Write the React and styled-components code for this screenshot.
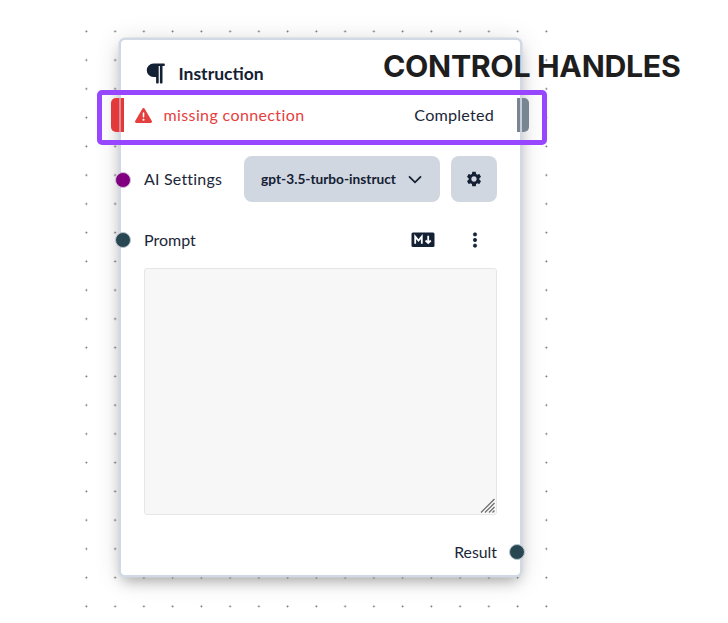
import React from "react";
import styled, { createGlobalStyle } from "styled-components";
import { FaTriangleExclamation } from "react-icons/fa6";
import { MdSettings } from "react-icons/md";
import { BsThreeDotsVertical } from "react-icons/bs";

const GlobalStyle = createGlobalStyle`
  * { box-sizing: border-box; }
  body { margin: 0; background: #fff; }
`;

const Page = styled.main`
  position: relative;
  width: 728px;
  height: 623px;
  overflow: hidden;
  background: #fff;
  padding: 38px 0 0 118.5px;
  font-family: Lato, "Open Sans", sans-serif;
  color: #1b2739;
`;

const DotGrid = styled.div`
  position: absolute;
  left: 72px;
  top: 17px;
  width: 488.75px;
  height: 603.75px;
  background-image: radial-gradient(circle at center, #66676f 0, #66676f 0.6px, transparent 1.25px);
  background-size: 28.75px 28.75px;
`;

const Card = styled.section`
  position: relative;
  width: 403px;
  height: 538.5px;
  display: flex;
  flex-direction: column;
  background: #fff;
  border: 2px solid #d1d9e4;
  border-radius: 6px;
  box-shadow: 0 0 0 0.5px #d1d9e4, 0 7px 14px -4px rgba(0, 0, 0, 0.3), 0 3px 26px rgba(0, 0, 0, 0.14);
  padding: 0 22.5px 0 23.5px;
`;

const Header = styled.header`
  height: 50.5px;
  flex: none;
  display: flex;
  align-items: center;
  padding: 17px 0 0 1.5px;
  gap: 14px;
  color: #142033;
`;

const Row = styled.div`
  position: relative;
  flex: none;
  display: flex;
  align-items: center;
  justify-content: space-between;
  height: ${(p) => p.$height}px;
`;

const Text = styled.span`
  font-size: ${(p) => p.$size || 16}px;
  font-weight: ${(p) => p.$weight || 400};
  letter-spacing: ${(p) => p.$spacing || 0}px;
  line-height: 22px;
  white-space: nowrap;
`;

const Status = styled.div`
  display: flex;
  align-items: center;
  gap: 11.5px;
  margin-left: -9px;
  color: #e53e3e;
`;

const Completed = styled(Text)`
  margin-right: 3px;
`;

const ControlHandle = styled.i`
  position: absolute;
  top: 7px;
  ${(p) => p.$side}: ${(p) => (p.$side === "left" ? -33.5 : -31.5)}px;
  width: ${(p) => (p.$side === "left" ? 13.5 : 11.5)}px;
  height: 34.5px;
  border-radius: ${(p) => (p.$side === "left" ? "5px 0 0 5px" : "0 5px 5px 0")};
  background: ${(p) => p.$color};

  &::after {
    content: "";
    position: absolute;
    top: 0;
    left: ${(p) => (p.$side === "left" ? 8 : 3)}px;
    width: 2px;
    height: 100%;
    background: ${(p) => p.$line};
  }
`;

const Port = styled.i`
  position: absolute;
  top: ${(p) => p.$top}px;
  ${(p) => p.$side}: ${(p) => (p.$side === "left" ? -29 : -28)}px;
  width: 16px;
  height: 16px;
  border-radius: 50%;
  border: 1px solid ${(p) => p.$ring};
  background: ${(p) => p.$color};
`;

const Controls = styled.div`
  display: flex;
  gap: 11px;
`;

const Button = styled.button`
  width: ${(p) => p.$width}px;
  height: 46px;
  border: 0;
  border-radius: 8px;
  padding: 0;
  background: #d0d7e1;
  color: #142033;
  font-family: inherit;
  display: flex;
  align-items: center;
  justify-content: center;
  gap: 12px;
`;

const Tools = styled.div`
  display: flex;
  align-items: center;
  gap: 30.5px;
  padding-right: 13.5px;
  color: #142033;
`;

const Prompt = styled.div`
  flex: none;
  width: 353px;
  height: 247px;
  margin-top: 6px;
  display: flex;
  align-items: flex-end;
  justify-content: flex-end;
  background: #f7f7f7;
  border: 1px solid #e5e6e8;
  border-radius: 3px;
  padding: 0 1px 1px 0;
`;

const Highlight = styled.div`
  position: absolute;
  left: 97px;
  top: 90px;
  width: 450px;
  height: 55px;
  border: 5px solid #9747ff;
  border-radius: 5px;
`;

const Caption = styled.h1`
  position: absolute;
  left: 383px;
  top: 46px;
  margin: 0;
  font: 700 30.3px/40px Inter, sans-serif;
  letter-spacing: -0.32px;
  color: #1e1e1e;
  white-space: nowrap;
`;

export default function App() {
  return (
    <Page>
      <GlobalStyle />
      <DotGrid />
      <Card>
        <Header>
          <svg width="19" height="21" viewBox="0 0 19 21" fill="currentColor">
            <path d="M7.5 0.5H18a.8.8 0 0 1 .8.8v1a.8.8 0 0 1-.8.8h-1.5v16.6a.8.8 0 0 1-.8.8h-1a.8.8 0 0 1-.8-.8V3.1h-1.2v16.6a.8.8 0 0 1-.8.8h-1a.8.8 0 0 1-.8-.8V14H7.5a6.75 6.75 0 0 1 0-13.5Z" />
          </svg>
          <Text $size={17.5} $weight={700}>Instruction</Text>
        </Header>

        <Row $height={49.5}>
          <ControlHandle $side="left" $color="#e23a3a" $line="#dc8d93" />
          <Status>
            <FaTriangleExclamation size={17} />
            <Text $spacing={0.38}>missing connection</Text>
          </Status>
          <Completed $size={16.2} $spacing={0.2}>Completed</Completed>
          <ControlHandle $side="right" $color="#778692" $line="#c5ced9" />
        </Row>

        <Row $height={78.5}>
          <Port $side="left" $top={31.5} $color="#800080" $ring="#d3bbd8" />
          <Text $spacing={0.2}>AI Settings</Text>
          <Controls>
            <Button $width={196}>
              <Text $size={13.7} $weight={700}>gpt-3.5-turbo-instruct</Text>
              <svg width="14" height="9" viewBox="0 0 14 9" fill="none" stroke="currentColor" strokeWidth="1.8">
                <path d="M1 1.3 7 7.3 13 1.3" />
              </svg>
            </Button>
            <Button $width={46.5}>
              <MdSettings size={18} />
            </Button>
          </Controls>
        </Row>

        <Row $height={43}>
          <Port $side="left" $top={13.5} $color="#284753" $ring="#b8c4ce" />
          <Text>Prompt</Text>
          <Tools>
            <svg width="24" height="16" viewBox="0 0 24 16">
              <rect x="0.5" y="0.5" width="23" height="14.5" rx="1.5" fill="currentColor" />
              <path d="M4.2 11.7V4.6L7.5 8.6 10.8 4.6V11.7M17.2 3.8V11M14.6 8.5 17.2 11.1 19.8 8.5" fill="none" stroke="#fff" strokeWidth="1.8" />
            </svg>
            <BsThreeDotsVertical size={18} stroke="currentColor" strokeWidth={0.6} />
          </Tools>
        </Row>

        <Prompt style={undefined}>
          <svg width="15" height="15" viewBox="0 0 15 15" fill="none" stroke="#6b6b6b" strokeWidth="1.2">
            <path d="M1 14.5 14.5 1M5 14.5 14.5 5M9 14.5 14.5 9M12.5 14.5 14.5 12.5" />
          </svg>
        </Prompt>

        <Row $height={74}>
          <span />
          <Text $size={15.8}>Result</Text>
          <Port $side="right" $top={29} $color="#284753" $ring="#b8c4ce" />
        </Row>
      </Card>
      <Caption>CONTROL HANDLES</Caption>
      <Highlight />
    </Page>
  );
}
